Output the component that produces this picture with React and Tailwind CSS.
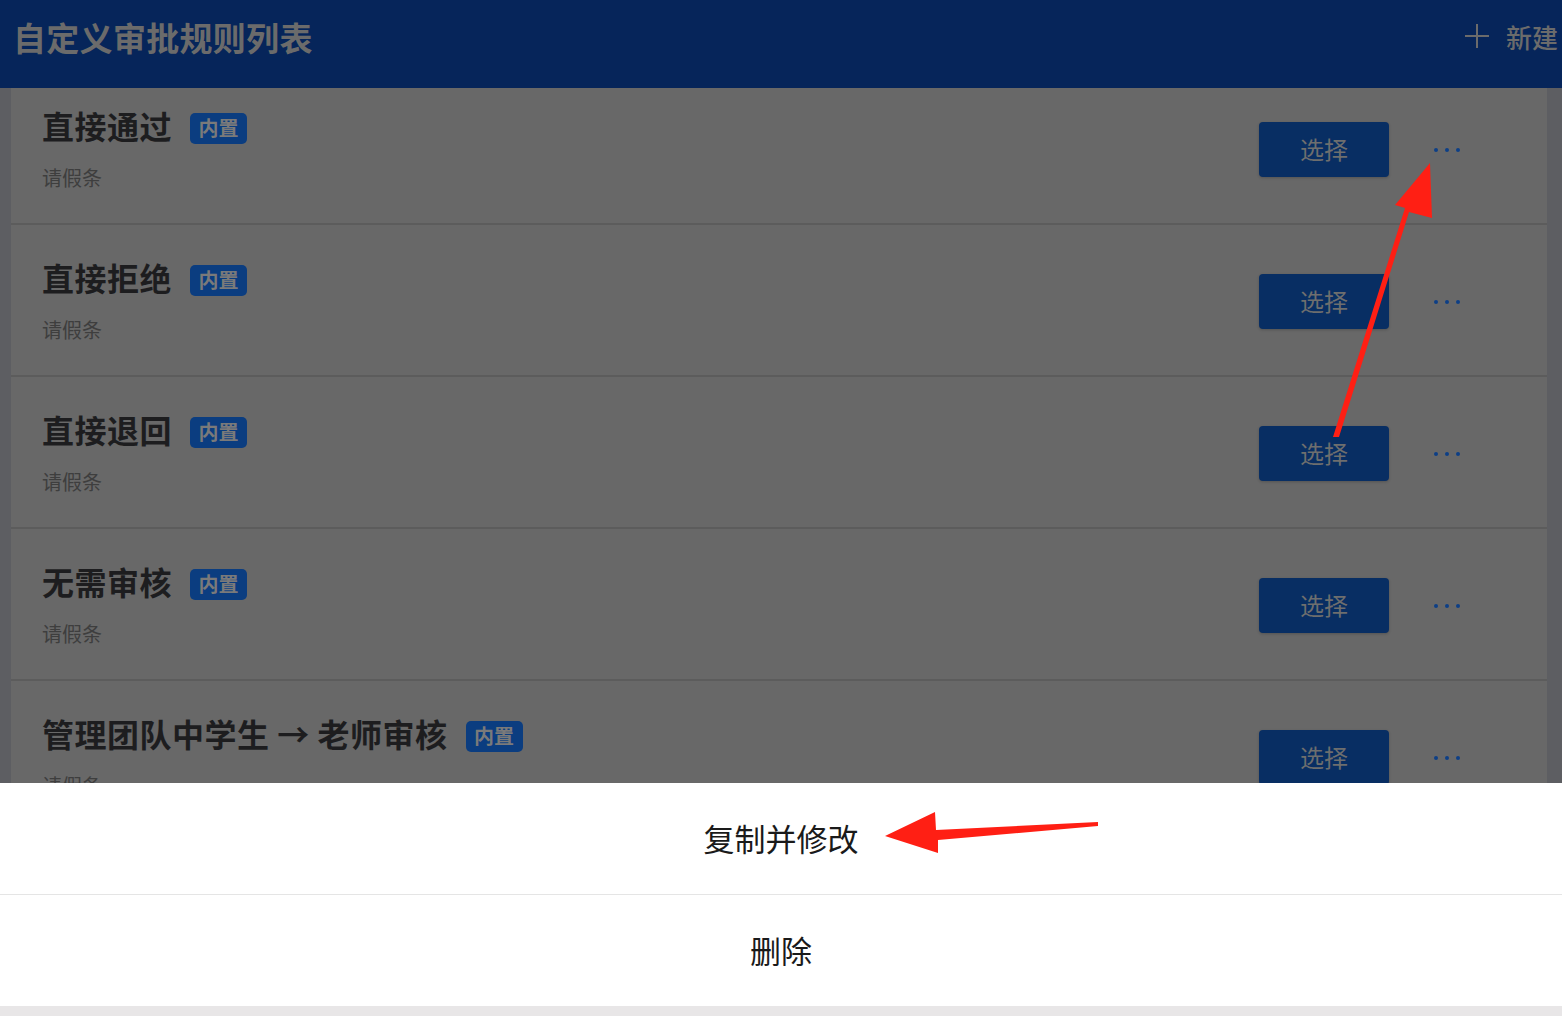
const rules = [
  { name: '直接通过', type: '请假条' },
  { name: '直接拒绝', type: '请假条' },
  { name: '直接退回', type: '请假条' },
  { name: '无需审核', type: '请假条' },
  { name: '管理团队中学生 → 老师审核', type: '请假条' },
];

const font = { fontFamily: '"Noto Sans CJK SC", "Noto Sans", sans-serif' };

function RuleRow({ rule }) {
  return (
    <div className="flex h-[152px] shrink-0 items-center border-b-2 border-[#5c5c5c] bg-[#686868] pl-[31px] pr-[87px]">
      <div className="flex flex-1 flex-col self-start pt-[31px]">
        <div className="flex items-center gap-[18px]">
          <span className="text-[32px] font-semibold leading-[42px] tracking-[0.5px] text-[#1d1d1f]">{rule.name}</span>
          <span className="mt-[6px] flex h-[31px] w-[57px] items-center justify-center rounded-[5px] bg-[#0b3d80] text-[20px] font-bold text-[#7a7a7a]">
            内置
          </span>
        </div>
        <div className="mt-[17px] text-[20px] leading-[30px] text-[#3e3e3e]">{rule.type}</div>
      </div>
      <button className="mt-[2px] h-[55px] w-[130px] rounded-[4px] bg-[#082e63] text-[24px] text-[#6e6e6e] shadow-[0_1px_3px_rgba(0,0,0,0.2)]">
        选择
      </button>
      <div className="ml-[45px] mt-[4px] flex items-center gap-[7px]">
        <span className="h-[4px] w-[4px] rounded-full bg-[#0d3f86]" />
        <span className="h-[4px] w-[4px] rounded-full bg-[#0d3f86]" />
        <span className="h-[4px] w-[4px] rounded-full bg-[#0d3f86]" />
      </div>
    </div>
  );
}

export default function App() {
  return (
    <div className="relative h-[1016px] w-full overflow-hidden bg-[#5d5e62]" style={font}>
      <div className="flex h-full flex-col">
        <header className="relative z-10 flex h-[88px] shrink-0 items-center justify-between bg-[#06255a] pl-[13px] pr-[4px]">
          <h1 className="pb-[12px] text-[33px] font-bold tracking-[0.3px] text-[#6b6b6b]">自定义审批规则列表</h1>
          <div className="flex items-center gap-[16px] pb-[16px] text-[#6b6b6b]">
            <svg width="26" height="26" viewBox="0 0 26 26" fill="none" stroke="#6b6b6b" strokeWidth="2">
              <path d="M13 1v24M1 13h24" />
            </svg>
            <span className="text-[26px] font-medium">新建</span>
          </div>
        </header>
        <div className="flex-1 overflow-hidden pl-[11px] pr-[15px]">
          <div className="-mt-[15px] flex flex-col">
            {rules.map((r) => (
              <RuleRow key={r.name} rule={r} />
            ))}
          </div>
        </div>
      </div>

      <div className="absolute bottom-0 left-0 right-0 bg-white">
        <div className="flex h-[112px] items-center justify-center border-b border-[#e5e5e5] text-[31px] text-[#1a1a1a]">
          复制并修改
        </div>
        <div className="flex h-[111px] items-center justify-center text-[31px] text-[#1a1a1a]">删除</div>
        <div className="h-[10px] bg-[#e8e6e7]" />
      </div>

      <svg className="pointer-events-none absolute left-0 top-0" width="1562" height="1016">
        <polygon points="1333,437 1339,437 1409,212 1432,218 1430,163 1395,205 1405,208" fill="#ff1f14" />
        <polygon points="1098,822 1098,826 938,840 938,853 885,836 935,812 936,830" fill="#ff1f14" />
      </svg>
    </div>
  );
}
